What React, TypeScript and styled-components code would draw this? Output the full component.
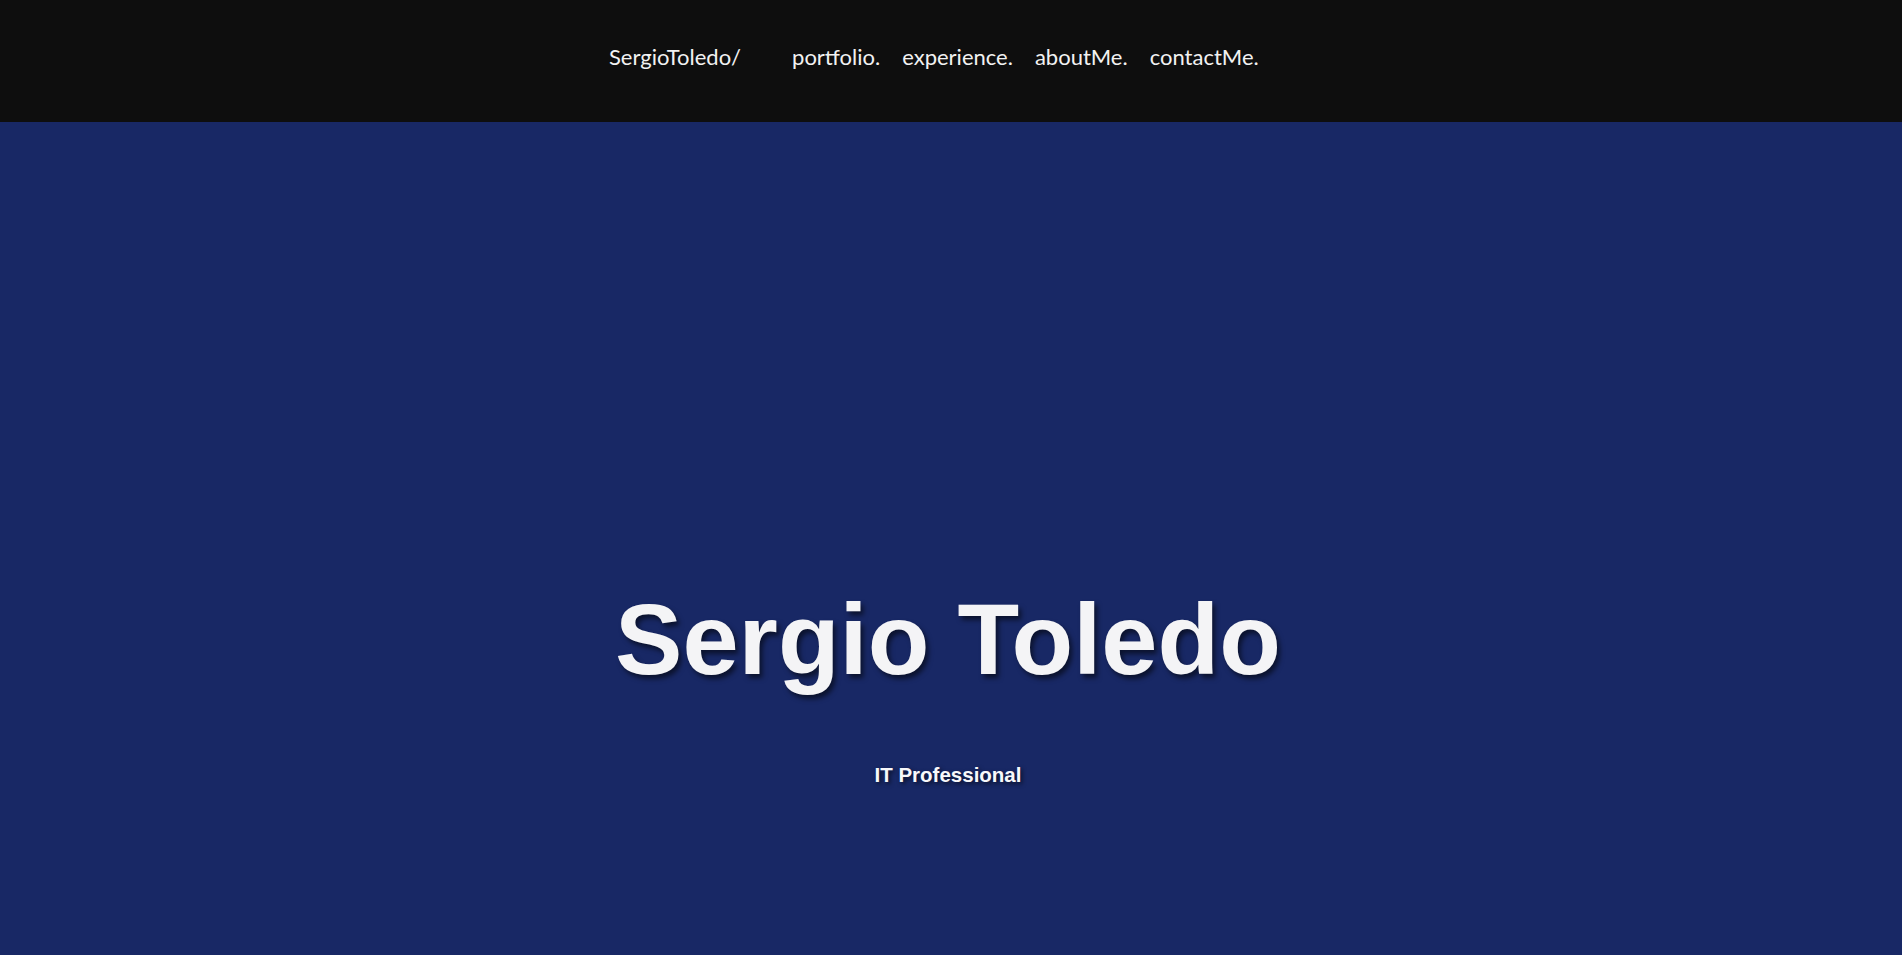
import React from "react";
import styled, { createGlobalStyle } from "styled-components";

const Global = createGlobalStyle`
  html, body { margin: 0; padding: 0; }
  body { background: #182865; font-family: Lato, "Liberation Sans", sans-serif; }
`;

const NavBar = styled.header`
  height: 122px;
  background: #0e0e0e;
  display: flex;
  align-items: center;
`;

const NavInner = styled.nav`
  width: 684px;
  margin: 0 auto;
  display: flex;
  align-items: center;
  padding-bottom: 10px;
`;

const Brand = styled.a`
  font-family: Lato, sans-serif;
  font-size: 22px;
  color: #f2f2f2;
  text-decoration: none;
  margin-right: 51px;
`;

const Links = styled.ul`
  display: flex;
  gap: 22px;
  list-style: none;
  margin: 0;
  padding: 0;
`;

const NavLink = styled.a`
  font-family: Lato, sans-serif;
  font-size: 22px;
  color: #f2f2f2;
  text-decoration: none;
`;

const Hero = styled.main`
  min-height: 833px;
  background: #182865;
  display: flex;
  flex-direction: column;
  align-items: center;
  padding: 467px 6px 0 0;
  box-sizing: border-box;
`;

const Title = styled.h1`
  margin: 0;
  font-family: "Liberation Sans", Arial, sans-serif;
  font-weight: 700;
  font-size: 101px;
  line-height: 101px;
  color: #f4f4f6;
  text-shadow: 3px 4px 5px rgba(0, 0, 0, 0.55);
`;

const Subtitle = styled.p`
  margin: 75px 0 0;
  font-family: "Liberation Sans", Arial, sans-serif;
  font-weight: 700;
  font-size: 20.5px;
  line-height: 20px;
  color: #f8f8fa;
  text-shadow: 2px 2px 4px rgba(0, 0, 0, 0.6);
`;

const links = ["portfolio.", "experience.", "aboutMe.", "contactMe."];

export default function App() {
  return (
    <>
      <Global />
      <NavBar>
        <NavInner>
          <Brand href="#">SergioToledo/</Brand>
          <Links>
            {links.map((l) => (
              <li key={l}>
                <NavLink href="#">{l}</NavLink>
              </li>
            ))}
          </Links>
        </NavInner>
      </NavBar>
      <Hero>
        <Title>Sergio Toledo</Title>
        <Subtitle>IT Professional</Subtitle>
      </Hero>
    </>
  );
}
